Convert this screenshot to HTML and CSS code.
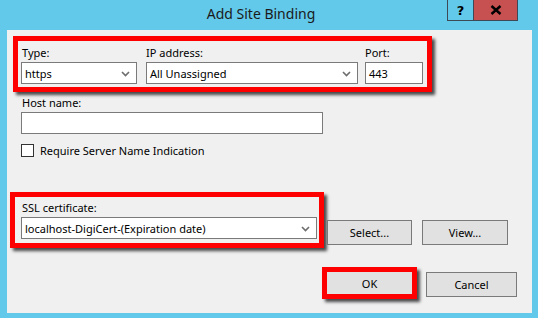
FILE: index.html
```html
<!DOCTYPE html>
<html>
<head>
<meta charset="utf-8">
<link rel="stylesheet" href="styles.css">
</head>
<body>
<div class="window">
  <div class="titlebar">
    <div class="title">Add Site Binding</div>
    <div class="caption-btns">
      <div class="cap help">?</div>
      <div class="cap close">
        <svg width="12" height="10" viewBox="0 0 12 10"><path d="M1.5 1 L10.5 9 M10.5 1 L1.5 9" stroke="#000" stroke-width="2.4" fill="none"/></svg>
      </div>
    </div>
  </div>
  <div class="panel">
    <div class="redbox row1">
      <div class="field f-type">
        <div class="label">Type:</div>
        <div class="select"><span>https</span><svg class="chev" width="9" height="6" viewBox="0 0 9 6"><path d="M1 1 L4.5 4.5 L8 1" stroke="#6d6d6d" stroke-width="1.6" fill="none"/></svg></div>
      </div>
      <div class="field f-ip">
        <div class="label">IP address:</div>
        <div class="select"><span>All Unassigned</span><svg class="chev" width="9" height="6" viewBox="0 0 9 6"><path d="M1 1 L4.5 4.5 L8 1" stroke="#6d6d6d" stroke-width="1.6" fill="none"/></svg></div>
      </div>
      <div class="field f-port">
        <div class="label">Port:</div>
        <div class="input"><span>443</span></div>
      </div>
    </div>

    <div class="host">
      <div class="label">Host name:</div>
      <div class="input host-input"></div>
    </div>

    <div class="check-row">
      <div class="checkbox"></div>
      <div class="check-label">Require Server Name Indication</div>
    </div>

    <div class="ssl-row">
      <div class="redbox ssl">
        <div class="label">SSL certificate:</div>
        <div class="select ssl-select"><span>localhost-DigiCert-(Expiration date)</span><svg class="chev" width="9" height="6" viewBox="0 0 9 6"><path d="M1 1 L4.5 4.5 L8 1" stroke="#6d6d6d" stroke-width="1.6" fill="none"/></svg></div>
      </div>
      <div class="btn btn-select">Select...</div>
      <div class="btn btn-view">View...</div>
    </div>

    <div class="bottom-row">
      <div class="redbox ok-box"><div class="btn btn-ok">OK</div></div>
      <div class="btn btn-cancel">Cancel</div>
    </div>
  </div>
</div>
</body>
</html>
```
FILE: styles.css
```css
* { box-sizing: border-box; }
html, body { margin: 0; padding: 0; }
body {
  width: 538px;
  height: 318px;
  overflow: hidden;
  background: #63c9ea;
  font-family: "Noto Sans", "Open Sans", "Liberation Sans", sans-serif;
  font-size: 11px;
  color: #000;
}
.window { width: 538px; height: 318px; background: #63c9ea; }
.titlebar { position: relative; height: 30px; }
.title {
  width: 522px;
  text-align: center;
  font-size: 14px;
  line-height: 28px;
  color: #1a1a1a;
}
.caption-btns {
  position: absolute;
  top: 0;
  left: 447px;
  display: flex;
}
.cap {
  height: 21px;
  border: 1px solid #3d4a55;
  border-top: none;
  display: flex;
  align-items: center;
  justify-content: center;
}
.help {
  width: 27px;
  font-weight: bold;
  font-size: 13px;
  font-family: "DejaVu Sans", sans-serif;
}
.close {
  width: 45px;
  margin-left: -1px;
  background: #c75050;
  border-color: #3d4a55;
}
.panel {
  margin-left: 7px;
  width: 525px;
  height: 283px;
  background: #f0f0f0;
  padding-top: 6px;
}
.redbox {
  border: 5px solid #ff0000;
  box-shadow: 3px 3px 3px rgba(0, 0, 0, 0.7);
}
.row1 {
  margin-left: 6px;
  width: 419px;
  height: 56px;
  display: flex;
  padding: 4px 0 0 3px;
}
.label {
  line-height: 16px;
  height: 16px;
  margin-bottom: 1px;
  padding-left: 1px;
}
.select, .input {
  height: 22px;
  background: #fff;
  border: 1px solid #7a7a7a;
  display: flex;
  align-items: center;
  padding-left: 3px;
  position: relative;
}
.select .chev { position: absolute; right: 6px; top: 8px; }
.f-type { width: 116px; }
.f-ip { width: 212px; margin-left: 9px; }
.f-ip .label { padding-left: 0; }
.f-port { width: 58px; margin-left: 7px; }
.f-port .label { padding-left: 0; }
.host { margin: 3px 0 0 14px; }
.host-input { width: 302px; }
.check-row {
  margin: 10px 0 0 14px;
  display: flex;
  align-items: center;
  height: 13px;
}
.checkbox {
  width: 13px;
  height: 13px;
  border: 1px solid #333;
  background: #fff;
}
.check-label { margin-left: 6px; line-height: 13px; }
.ssl-row {
  margin: 35px 0 0 3px;
  display: flex;
  align-items: flex-start;
}
.ssl {
  width: 314px;
  height: 56px;
  padding: 3px 2px 0 6px;
}
.ssl-select { height: 22px; padding-left: 3px; }
.btn {
  height: 25px;
  background: #e1e1e1;
  border: 1px solid #7a7a7a;
  display: flex;
  align-items: center;
  justify-content: center;
}
.btn-select { width: 85px; margin: 28px 0 0 3px; }
.btn-view { width: 86px; margin: 28px 0 0 10px; }
.bottom-row {
  margin: 19px 0 0 315px;
  display: flex;
  align-items: flex-start;
}
.ok-box { width: 95px; height: 32px; }
.btn-ok { height: 22px; width: 85px; border-color: #e1e1e1; }
.btn-cancel { width: 91px; margin: 5px 0 0 9px; }
```
